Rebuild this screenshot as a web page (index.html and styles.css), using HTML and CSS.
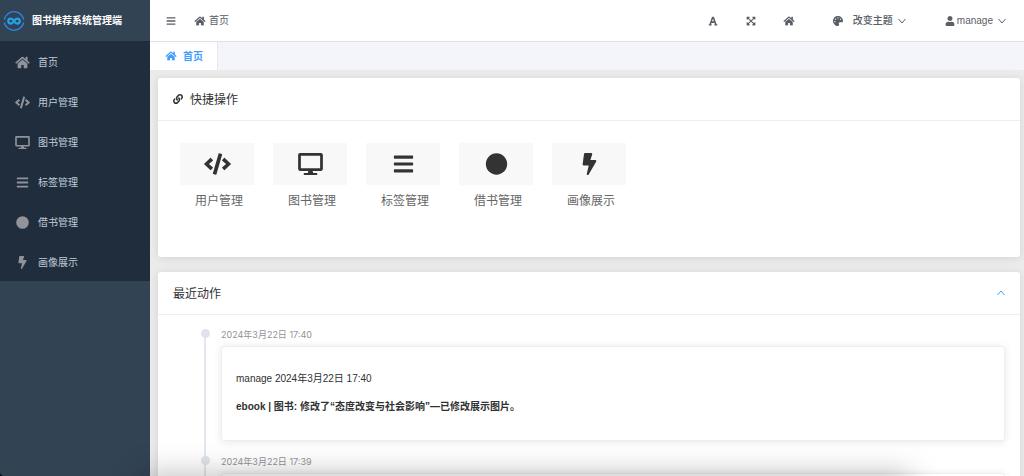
FILE: index.html
```html
<!DOCTYPE html>
<html lang="zh-CN">
<head>
<meta charset="utf-8">
<meta name="viewport" content="width=device-width, initial-scale=1">
<title>图书推荐系统管理端</title>
<link rel="stylesheet" href="styles.css">
</head>
<body>
<svg class="sprite" aria-hidden="true">
  <symbol id="home" viewBox="0 0 576 512"><path d="M280.37 148.26L96 300.11V464a16 16 0 0 0 16 16l112.06-.29a16 16 0 0 0 15.92-16V368a16 16 0 0 1 16-16h64a16 16 0 0 1 16 16v95.64a16 16 0 0 0 16 16.05L464 480a16 16 0 0 0 16-16V300L295.67 148.26a12.19 12.19 0 0 0-15.3 0zM571.6 251.47L488 182.56V44.05a12 12 0 0 0-12-12h-56a12 12 0 0 0-12 12v72.61L318.47 43a48 48 0 0 0-61 0L4.34 251.47a12 12 0 0 0-1.6 16.9l25.5 31A12 12 0 0 0 45.15 301l235.22-193.74a12.19 12.19 0 0 1 15.3 0L530.9 301a12 12 0 0 0 16.9-1.6l25.5-31a12 12 0 0 0-1.7-16.93z"/></symbol>
  <symbol id="code" viewBox="0 0 640 512"><path d="M278.9 511.5l-61-17.7c-6.4-1.8-10-8.5-8.2-14.9L346.2 8.7c1.8-6.4 8.5-10 14.9-8.2l61 17.7c6.4 1.8 10 8.5 8.2 14.9L293.8 503.3c-1.9 6.4-8.5 10.1-14.9 8.2zm-114-112.2l43.5-46.4c4.6-4.9 4.3-12.7-.8-17.2L117 256l90.6-79.7c5.1-4.5 5.5-12.3.8-17.2l-43.5-46.4c-4.5-4.8-12.1-5.1-17-.5L3.8 247.2c-5.1 4.7-5.1 12.8 0 17.5l144.1 135.1c4.9 4.6 12.5 4.4 17-.5zm327.2.6l144.1-135.1c5.1-4.7 5.1-12.8 0-17.5L492.1 112.1c-4.8-4.5-12.4-4.3-17 .5L431.6 159c-4.6 4.9-4.3 12.7.8 17.2L523 256l-90.6 79.7c-5.1 4.5-5.5 12.3-.8 17.2l43.5 46.4c4.5 4.9 12.1 5.1 17 .6z"/></symbol>
  <symbol id="desktop" viewBox="0 0 576 512"><path d="M528 0H48C21.5 0 0 21.5 0 48v320c0 26.5 21.5 48 48 48h192l-16 48h-72c-13.3 0-24 10.7-24 24s10.7 24 24 24h272c13.300 0 24-10.700 24-24s-10.700-24-24-24h-72l-16-48h192c26.500 0 48-21.500 48-48V48c0-26.500-21.500-48-48-48zm-16 352H64V64h448v288z"/></symbol>
  <symbol id="bars" viewBox="0 0 448 512"><path d="M16 132h416c8.837 0 16-7.163 16-16V76c0-8.837-7.163-16-16-16H16C7.163 60 0 67.163 0 76v40c0 8.837 7.163 16 16 16zm0 160h416c8.837 0 16-7.163 16-16v-40c0-8.837-7.163-16-16-16H16c-8.837 0-16 7.163-16 16v40c0 8.837 7.163 16 16 16zm0 160h416c8.837 0 16-7.163 16-16v-40c0-8.837-7.163-16-16-16H16c-8.837 0-16 7.163-16 16v40c0 8.837 7.163 16 16 16z"/></symbol>
  <symbol id="circle" viewBox="0 0 512 512"><circle cx="256" cy="256" r="248"/></symbol>
  <symbol id="bolt" viewBox="0 0 320 512"><path d="M296 160H180.600l42.600-129.800C227.200 15 215.700 0 200 0H56C44 0 33.800 8.900 32.200 20.800l-32 240C-1.700 275.200 9.500 288 24 288h118.700L96.600 482.500c-3.600 15.200 8 29.500 23.300 29.500 8.400 0 16.400-4.400 20.800-12l176-304c9.300-15.900-2.200-36-20.700-36z"/></symbol>
  <symbol id="font" viewBox="0 0 448 512"><path d="M432 416h-23.410L277.880 53.690A32 32 0 0 0 247.580 32h-47.160a32 32 0 0 0-30.300 21.690L39.410 416H16a16 16 0 0 0-16 16v32a16 16 0 0 0 16 16h128a16 16 0 0 0 16-16v-32a16 16 0 0 0-16-16h-19.580l23.300-64h152.560l23.300 64H304a16 16 0 0 0-16 16v32a16 16 0 0 0 16 16h128a16 16 0 0 0 16-16v-32a16 16 0 0 0-16-16zM176.850 272L224 142.510 271.150 272z"/></symbol>
  <symbol id="expand" viewBox="0 0 448 512"><path d="M448 344v112a23.940 23.940 0 0 1-24 24H312c-21.390 0-32.090-25.900-17-41l36.200-36.200L224 295.600 116.770 402.900 153 439c15.090 15.100 4.390 41-17 41H24a23.940 23.940 0 0 1-24-24V344c0-21.400 25.890-32.100 41-17l36.190 36.200L184.460 256 77.180 148.700 41 185c-15.100 15.100-41 4.400-41-17V56a23.940 23.940 0 0 1 24-24h112c21.390 0 32.090 25.900 17 41l-36.200 36.200L224 216.400l107.230-107.300L295 73c-15.090-15.100-4.390-41 17-41h112a23.940 23.940 0 0 1 24 24v112c0 21.400-25.890 32.100-41 17l-36.190-36.200L263.540 256l107.280 107.300L407 327.100c15.100-15.200 41-4.500 41 16.900z"/></symbol>
  <symbol id="palette" viewBox="0 0 512 512"><path d="M204.300 5C104.900 24.400 24.800 104.300 5.200 203.400c-37 187 131.700 326.400 258.800 306.700 41.200-6.400 61.400-54.600 42.500-91.700-23.100-45.400 9.900-98.400 60.900-98.400h79.700c35.800 0 64.800-29.600 64.900-65.300C511.500 97.100 368.100-26.900 204.300 5zM96 320c-17.700 0-32-14.300-32-32s14.300-32 32-32 32 14.300 32 32-14.300 32-32 32zm32-128c-17.700 0-32-14.300-32-32s14.300-32 32-32 32 14.300 32 32-14.300 32-32 32zm128-64c-17.700 0-32-14.300-32-32s14.300-32 32-32 32 14.300 32 32-14.300 32-32 32zm128 64c-17.700 0-32-14.300-32-32s14.300-32 32-32 32 14.300 32 32-14.300 32-32 32z"/></symbol>
  <symbol id="user" viewBox="0 0 448 512"><path d="M224 256c70.700 0 128-57.300 128-128S294.700 0 224 0 96 57.300 96 128s57.300 128 128 128zm89.600 32h-16.700c-22.200 10.200-46.900 16-72.900 16s-50.600-5.800-72.900-16h-16.700C60.200 288 0 348.200 0 422.400V464c0 26.500 21.500 48 48 48h352c26.500 0 48-21.500 48-48v-41.600c0-74.200-60.200-134.400-134.400-134.400z"/></symbol>
  <symbol id="link" viewBox="0 0 512 512"><path d="M326.612 185.391c59.747 59.809 58.927 155.698.36 214.590-.11.120-.24.250-.36.370l-67.200 67.200c-59.270 59.270-155.699 59.262-214.960 0-59.270-59.260-59.270-155.700 0-214.960l37.106-37.106c9.840-9.840 26.786-3.300 27.294 10.606.648 17.722 3.826 35.527 9.690 52.721 1.986 5.822.567 12.262-3.783 16.612l-13.087 13.087c-28.026 28.026-28.905 73.660-1.155 101.960 28.024 28.579 74.086 28.749 102.325.510l67.200-67.190c28.191-28.191 28.073-73.757 0-101.830-3.701-3.694-7.429-6.564-10.341-8.569a16.037 16.037 0 0 1-6.947-12.606c-.396-10.567 3.348-21.456 11.698-29.806l21.054-21.055c5.521-5.521 14.182-6.199 20.584-1.731a152.482 152.482 0 0 1 20.522 17.197zM467.547 44.449c-59.261-59.262-155.690-59.270-214.960 0l-67.200 67.200c-.120.120-.250.250-.360.370-58.566 58.892-59.387 154.781.360 214.590a152.454 152.454 0 0 0 20.521 17.196c6.402 4.468 15.064 3.789 20.584-1.731l21.054-21.055c8.350-8.350 12.094-19.239 11.698-29.806a16.037 16.037 0 0 0-6.947-12.606c-2.912-2.005-6.640-4.875-10.341-8.569-28.073-28.073-28.191-73.639 0-101.830l67.200-67.190c28.239-28.239 74.300-28.069 102.325.510 27.750 28.300 26.872 73.934-1.155 101.960l-13.087 13.087c-4.350 4.350-5.769 10.790-3.783 16.612 5.864 17.194 9.042 34.999 9.690 52.721.509 13.906 17.454 20.446 27.294 10.606l37.106-37.106c59.271-59.259 59.271-155.699.001-214.959z"/></symbol>
  <symbol id="chevron" viewBox="0 0 16 16"><path d="M1 4l7 8 7-8"/></symbol>
</svg>

<div class="app">
  <aside class="sidebar">
    <div class="brand">
      <svg class="logo" viewBox="0 0 44 44" aria-hidden="true">
        <g fill="none" stroke="#2f86f0" stroke-width="2.600">
          <path d="M2.500 19A20 20 0 0 1 41.500 19"/>
          <path d="M41.500 25A20 20 0 0 1 2.500 25"/>
          <path d="M22 22c-2-3.500-4-5-6.500-5a5 5 0 0 0 0 10c2.500 0 4.500-1.500 6.500-5s4-5 6.500-5a5 5 0 0 1 0 10c-2.500 0-4.500-1.500-6.500-5z" stroke="#22a0ee" stroke-width="4.500"/>
        </g>
      </svg>
      <span>图书推荐系统管理端</span>
    </div>
    <nav class="menu">
      <a href="#"><svg class="icon"><use href="#home"/></svg><span>首页</span></a>
      <a href="#"><svg class="icon"><use href="#code"/></svg><span>用户管理</span></a>
      <a href="#"><svg class="icon"><use href="#desktop"/></svg><span>图书管理</span></a>
      <a href="#"><svg class="icon"><use href="#bars"/></svg><span>标签管理</span></a>
      <a href="#"><svg class="icon"><use href="#circle"/></svg><span>借书管理</span></a>
      <a href="#"><svg class="icon"><use href="#bolt"/></svg><span>画像展示</span></a>
    </nav>
  </aside>

  <div class="page">
    <header class="topbar">
      <button class="tool" aria-label="折叠菜单"><svg class="icon"><use href="#bars"/></svg></button>
      <a class="crumb" href="#"><svg class="icon"><use href="#home"/></svg>首页</a>
      <div class="tools">
        <button class="tool" aria-label="字体"><svg class="icon"><use href="#font"/></svg></button>
        <button class="tool" aria-label="全屏"><svg class="icon"><use href="#expand"/></svg></button>
        <button class="tool" aria-label="主页"><svg class="icon"><use href="#home"/></svg></button>
      </div>
      <button class="tool theme"><svg class="icon"><use href="#palette"/></svg><span>改变主题</span><svg class="arrow"><use href="#chevron"/></svg></button>
      <button class="tool account"><svg class="icon"><use href="#user"/></svg><span>manage</span><svg class="arrow"><use href="#chevron"/></svg></button>
    </header>
    <nav class="tabs">
      <a class="tab" href="#"><svg class="icon"><use href="#home"/></svg><span>首页</span></a>
    </nav>

    <main class="content">
      <section class="card quick">
        <h2 class="card-head"><svg class="icon"><use href="#link"/></svg><span>快捷操作</span></h2>
        <div class="shortcuts">
          <a href="#"><span class="tile"><svg class="icon"><use href="#code"/></svg></span><span class="label">用户管理</span></a>
          <a href="#"><span class="tile"><svg class="icon"><use href="#desktop"/></svg></span><span class="label">图书管理</span></a>
          <a href="#"><span class="tile"><svg class="icon"><use href="#bars"/></svg></span><span class="label">标签管理</span></a>
          <a href="#"><span class="tile"><svg class="icon"><use href="#circle"/></svg></span><span class="label">借书管理</span></a>
          <a href="#"><span class="tile"><svg class="icon"><use href="#bolt"/></svg></span><span class="label">画像展示</span></a>
        </div>
      </section>

      <section class="card">
        <div class="card-head">
          <h2>最近动作</h2>
          <button class="collapse" aria-label="收起"><svg class="arrow"><use href="#chevron"/></svg></button>
        </div>
        <ol class="timeline">
          <li>
            <time>2024年3月22日 17:40</time>
            <article class="entry">
              <p>manage 2024年3月22日 17:40</p>
              <p class="action">ebook | 图书: 修改了“态度改变与社会影响”—已修改展示图片。</p>
            </article>
          </li>
          <li>
            <time>2024年3月22日 17:39</time>
            <article class="entry"></article>
          </li>
        </ol>
      </section>
    </main>
  </div>
</div>
<div class="edge-shade"></div>
</body>
</html>
```
FILE: styles.css
```css
* { box-sizing: border-box; }

body {
  margin: 0;
  background: #000;
  color: #303133;
  font: 10px/16px "Liberation Sans", "Noto Sans CJK SC", sans-serif;
}

h2, p, ol { margin: 0; padding: 0; }
h2 { font-size: inherit; font-weight: inherit; }
a { color: inherit; text-decoration: none; }
button { padding: 0; border: 0; background: none; color: inherit; font: inherit; cursor: pointer; }

.sprite { position: absolute; width: 0; height: 0; }
.icon { display: block; flex: none; width: 12px; height: 10px; fill: currentColor; }
.arrow { display: block; flex: none; width: 8px; height: 8px; fill: none; stroke: currentColor; stroke-width: 2px; }

.app {
  display: flex;
  height: 100vh;
  overflow: hidden;
  border-bottom-left-radius: 4px;
}

.sidebar { flex: none; width: 150px; background: #324354; }

.brand {
  display: flex;
  align-items: center;
  gap: 7px;
  height: 41px;
  padding-left: 3px;
  color: #fff;
  font-weight: 700;
}
.logo { width: 22px; height: 22px; }

.menu { background: #202d3d; }
.menu a {
  display: flex;
  align-items: center;
  gap: 8px;
  height: 40px;
  padding: 2px 15px 0;
  color: #bfcbd9;
}
.menu .icon { width: 15px; height: 13px; color: #909399; }
.menu span, .tab span, .card-head span, .card-head h2 { padding-top: 2px; }

.page {
  display: flex;
  flex: 1;
  flex-direction: column;
  min-width: 0;
  background: #ebebeb;
}

.topbar {
  display: flex;
  flex: none;
  align-items: center;
  height: 42px;
  padding: 0 18px 0 15px;
  border-bottom: 1px solid #dfe0e8;
  background: #fff;
  color: #5a5e66;
}
.tool { display: flex; align-items: center; }
.crumb { display: flex; align-items: center; gap: 3px; margin-left: 17px; }
.tools { display: flex; gap: 26px; margin-left: auto; }
.theme { margin-left: 37px; font-weight: 500; }
.theme span { margin: 0 5px 0 9px; }
.account { margin-left: 38px; }
.account span { margin: 0 5px 0 1px; }

.tabs { display: flex; flex: none; height: 28px; background: #f4f5fa; }
.tab {
  display: flex;
  align-items: center;
  gap: 6px;
  padding: 0 14px 0 15px;
  border-right: 1px solid #e4e7ed;
  background: #fff;
  color: #409eff;
  font-weight: 700;
}

.content {
  display: flex;
  flex: 1;
  flex-direction: column;
  gap: 15px;
  min-height: 0;
  padding: 8px 4px 0 8px;
  overflow-y: auto;
  scrollbar-width: none;
}

.card {
  flex: none;
  border-radius: 3px;
  background: #fff;
  box-shadow: 0 1px 9px rgba(0, 0, 0, 0.1);
}
.card-head {
  display: flex;
  align-items: center;
  height: 43px;
  padding: 0 15px;
  border-bottom: 1px solid #ebeef5;
  font-size: 12px;
}
.quick .card-head { padding-left: 14px; }
.card-head .icon { margin-right: 6px; }
.collapse { margin-left: auto; color: #409eff; }
.collapse .arrow { transform: rotate(180deg); }

.shortcuts { display: flex; flex-wrap: wrap; gap: 19px; padding: 22px 22px 48px; }
.shortcuts a { width: 74px; color: #666; font-size: 12px; text-align: center; }
.tile { display: grid; place-items: center; height: 42px; background: #f8f8f8; color: #333; }
.tile .icon { width: 27px; height: 22px; }
.label { display: block; padding: 8px 0 0 4px; }

.timeline { padding: 13px 15px 0 43px; list-style: none; }
.timeline li {
  position: relative;
  padding: 0 0 14px 20px;
}
.timeline li::before {
  position: absolute;
  top: 6px;
  bottom: -6px;
  left: 3px;
  width: 2px;
  background: #e4e7ed;
  content: "";
}
.timeline li::after {
  position: absolute;
  top: 1px;
  left: 0;
  width: 9px;
  height: 9px;
  border-radius: 50%;
  background: #e0e3ea;
  content: "";
}
.timeline time { display: block; color: #909399; font: 9px/14px Inter, "Noto Sans CJK SC", sans-serif; }

.entry {
  min-height: 95px;
  margin-top: 4px;
  padding: 24px 14px;
  border: 1px solid #ebeef5;
  border-radius: 3px;
  background: #fff;
  box-shadow: 0 1px 9px rgba(0, 0, 0, 0.1);
}
.entry p + p { margin-top: 12px; }
.action { font-weight: 700; }

.edge-shade {
  position: fixed;
  right: 124px;
  bottom: -28px;
  left: 150px;
  height: 20px;
  box-shadow: 0 0 30px 10px rgba(0, 0, 0, 0.25);
  pointer-events: none;
}
```
